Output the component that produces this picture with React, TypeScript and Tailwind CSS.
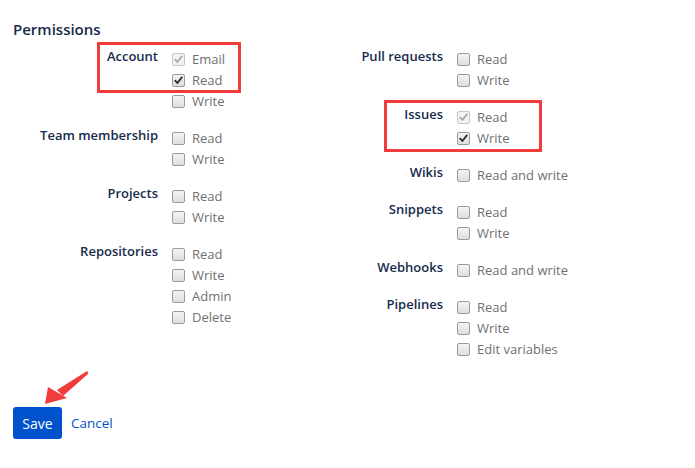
import React from 'react';

type Opt = { label: string; checked?: boolean; disabled?: boolean };
type Group = { name: string; options: Opt[] };

const left: Group[] = [
  { name: 'Account', options: [{ label: 'Email', checked: true, disabled: true }, { label: 'Read', checked: true }, { label: 'Write' }] },
  { name: 'Team membership', options: [{ label: 'Read' }, { label: 'Write' }] },
  { name: 'Projects', options: [{ label: 'Read' }, { label: 'Write' }] },
  { name: 'Repositories', options: [{ label: 'Read' }, { label: 'Write' }, { label: 'Admin' }, { label: 'Delete' }] },
];

const right: Group[] = [
  { name: 'Pull requests', options: [{ label: 'Read' }, { label: 'Write' }] },
  { name: 'Issues', options: [{ label: 'Read', checked: true, disabled: true }, { label: 'Write', checked: true }] },
  { name: 'Wikis', options: [{ label: 'Read and write' }] },
  { name: 'Snippets', options: [{ label: 'Read' }, { label: 'Write' }] },
  { name: 'Webhooks', options: [{ label: 'Read and write' }] },
  { name: 'Pipelines', options: [{ label: 'Read' }, { label: 'Write' }, { label: 'Edit variables' }] },
];

function Checkbox({ checked, disabled }: { checked?: boolean; disabled?: boolean }) {
  return (
    <span
      className={`w-[13px] h-[13px] rounded-[2px] border flex items-center justify-center shrink-0 ${
        disabled ? 'border-[#c6c6c6] bg-[#f3f3f3]' : 'border-[#9a9a9a] bg-gradient-to-b from-[#f4f4f4] to-[#dedede]'
      }`}
    >
      {checked && (
        <svg width="9" height="9" viewBox="0 0 9 9">
          <path
            d="M1.2 4.6 L3.4 7 L7.8 1.4"
            fill="none"
            stroke={disabled ? '#a9a9a9' : '#2b2b2b'}
            strokeWidth="1.8"
            strokeLinecap="round"
            strokeLinejoin="round"
          />
        </svg>
      )}
    </span>
  );
}

function Column({ groups }: { groups: Group[] }) {
  return (
    <div className="w-[285px] flex flex-col">
      {groups.map((g) => (
        <div key={g.name} className="flex mb-[16px]">
          <div className="w-[145px] text-right font-semibold text-[#172b4d] leading-[21px] -mt-[3px]">{g.name}</div>
          <div className="flex flex-col ml-[14px]">
            {g.options.map((o) => (
              <label key={o.label} className="flex items-center h-[21px] text-[#707070]">
                <Checkbox checked={o.checked} disabled={o.disabled} />
                <span className="ml-[7px]">{o.label}</span>
              </label>
            ))}
          </div>
        </div>
      ))}
    </div>
  );
}

export default function App() {
  return (
    <div className="relative w-[695px] h-[468px] bg-white text-[13px] font-['Open_Sans',sans-serif] overflow-hidden">
      <div className="pl-[13px] pt-[18px]">
        <h2 className="text-[15px] font-semibold text-[#172b4d] leading-[22px]">Permissions</h2>
        <div className="flex mt-[9px]">
          <Column groups={left} />
          <Column groups={right} />
        </div>
        <div className="flex items-center mt-[31px]">
          <button className="h-[32px] w-[49px] rounded-[3px] bg-[#0052cc] text-white text-[14px]">Save</button>
          <a className="ml-[9px] text-[#0052cc] text-[13.5px]">Cancel</a>
        </div>
      </div>

      {/* annotations */}
      <div className="absolute left-[97px] top-[42px] w-[144px] h-[51px] border-[3px] border-[#f23c3c]" />
      <div className="absolute left-[384px] top-[100px] w-[158px] h-[52px] border-[3px] border-[#f23c3c]" />
      <svg className="absolute left-0 top-0" width="120" height="420" viewBox="0 0 120 420">
        <path d="M87 371 L88.5 373.5 L63 396 L57 390 Z" fill="#f23c3c" />
        <path d="M45 404 L48 387 L67 398 Z" fill="#f23c3c" />
      </svg>
    </div>
  );
}
